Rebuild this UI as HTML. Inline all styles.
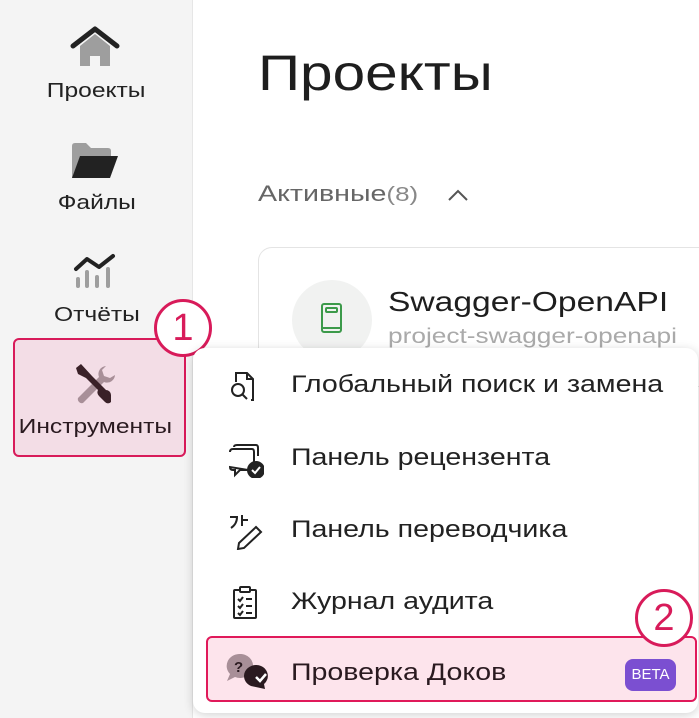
<!DOCTYPE html>
<html><head><meta charset="utf-8"><style>
*{margin:0;padding:0;box-sizing:border-box}
body{width:699px;height:718px;overflow:hidden;background:#fff;font-family:"Liberation Sans","DejaVu Sans",sans-serif;position:relative;color:#222}
.side{position:absolute;left:0;top:0;width:193px;height:718px;background:#f4f4f4;border-right:1px solid #e6e6e6}
.abs{position:absolute}
.lbl{position:absolute;width:193px;text-align:center;font-size:20px;color:#222}
.lbl span{display:inline-block;transform:scaleX(1.23);transform-origin:center}
.sx{display:inline-block;transform-origin:left center;white-space:nowrap}
.circ{position:absolute;width:58px;height:58px;border-radius:50%;border:3px solid #d81b5a;background:#fff;color:#d81b5a;font-size:38px;text-align:center;line-height:52px}
.item{position:absolute;left:291px;font-size:24px;color:#222;white-space:nowrap;transform:scaleX(1.19);transform-origin:left center}
</style></head><body>
<div class="side"></div>
<svg class="abs" style="left:70px;top:26px" width="50" height="42" viewBox="0 0 50 42"><path d="M10 20 L25 8 L40 20 V40 H30 V30 H20 V40 H10Z" fill="#9e9e9e"/><path d="M3 20 L25 3 L47 20" stroke="#222" stroke-width="5" fill="none" stroke-linejoin="round" stroke-linecap="round"/></svg>
<div class="lbl" style="top:80px"><span>Проекты</span></div>
<svg class="abs" style="left:70px;top:142px" width="50" height="40" viewBox="0 0 50 40"><path d="M2 4 Q2 1 5 1 H16 L21 6 H38 Q41 6 41 9 V14 H2Z" fill="#9e9e9e"/><path d="M2 14 H40 V36 H2Z" fill="#9e9e9e"/><path d="M10 14 H48 L40 36 H2Z" fill="#222"/></svg>
<div class="lbl" style="top:192px"><span>Файлы</span></div>
<svg class="abs" style="left:73px;top:252px" width="44" height="38" viewBox="0 0 44 38"><path d="M3 17 L14 7 L26 15 L40 4" stroke="#222" stroke-width="4" fill="none" stroke-linecap="round" stroke-linejoin="round"/><g stroke="#9e9e9e" stroke-width="4" stroke-linecap="round"><line x1="5" y1="27" x2="5" y2="34"/><line x1="14" y1="20" x2="14" y2="34"/><line x1="24" y1="25" x2="24" y2="34"/><line x1="35" y1="17" x2="35" y2="34"/></g></svg>
<div class="lbl" style="top:304px"><span>Отчёты</span></div>
<div class="abs" style="left:13px;top:338px;width:173px;height:119px;background:#f3dde6;border:2px solid #d81b5a;border-radius:6px"></div>
<svg class="abs" style="left:72px;top:362px" width="46" height="46" viewBox="0 0 46 46"><path d="M34 4 a8 8 0 0 0 -7 11 L6 36 a4 4 0 0 0 5 5 L32 20 a8 8 0 0 0 11 -7 L38 16 L32 14 L30 8Z" fill="#a88f98"/><path d="M4 6 L9 2 L20 14 L34 28 a5 5 0 0 1 5 5 L39 40 a4 4 0 0 1 -6 0 L27 34 a5 5 0 0 1 -1 -6 L14 16 L6 12Z" fill="#3a2128"/></svg>
<div class="lbl" style="left:2px;top:416px;width:187px;color:#2a1a20"><span>Инструменты</span></div>
<div class="circ" style="left:154px;top:299px">1</div>
<div class="abs" style="left:258px;top:44px;font-size:50px;color:#1e1e1e"><span class="sx" style="transform:scaleX(1.17)">Проекты</span></div>
<div class="abs" style="left:258px;top:181px;font-size:22px;color:#666"><span class="sx" style="transform:scaleX(1.3)">Активные<span style="font-size:20px;color:#888">(8)</span></span></div>
<svg class="abs" style="left:447px;top:188px" width="22" height="14" viewBox="0 0 22 14"><path d="M2 12 L11 3 L20 12" stroke="#555" stroke-width="2" fill="none"/></svg>
<div class="abs" style="left:258px;top:247px;width:460px;height:140px;border:1px solid #e4e4e4;border-radius:14px;background:#fff"></div>
<div class="abs" style="left:292px;top:280px;width:80px;height:80px;border-radius:50%;background:#f1f2f1"></div>
<svg class="abs" style="left:320px;top:302px" width="24" height="34" viewBox="0 0 24 34"><rect x="2" y="2" width="19" height="28" rx="2" fill="none" stroke="#3c9a4a" stroke-width="2"/><rect x="6" y="6" width="11" height="4" rx="1" fill="none" stroke="#3c9a4a" stroke-width="2"/><line x1="2" y1="26" x2="21" y2="26" stroke="#3c9a4a" stroke-width="2"/></svg>
<div class="abs" style="left:388px;top:286px;font-size:28px;color:#1e1e1e"><span class="sx" style="transform:scaleX(1.2)">Swagger-OpenAPI</span></div>
<div class="abs" style="left:388px;top:325px;font-size:21px;color:#aaa"><span class="sx" style="transform:scaleX(1.25)">project-swagger-openapi</span></div>
<div class="abs" style="left:193px;top:348px;width:505px;height:365px;background:#fff;border-radius:12px;box-shadow:0 2px 10px rgba(0,0,0,.18)"></div>
<svg class="abs" style="left:228px;top:370px" width="32" height="34" viewBox="0 0 32 34" fill="none" stroke="#222" stroke-width="2"><path d="M8 12 V3 H19 L25 9 V30 H23"/><path d="M19 3 V9 H25"/><circle cx="10" cy="20" r="6"/><line x1="14" y1="24" x2="19" y2="29"/></svg>
<div class="item" style="top:371px">Глобальный поиск и замена</div>
<svg class="abs" style="left:228px;top:442px" width="36" height="36" viewBox="0 0 36 36" fill="none" stroke="#222" stroke-width="2"><path d="M6 5 Q6 3 9 3 H28 Q30 3 30 6 V14"/><path d="M2 10 Q2 7 5 7 H24 Q26 7 26 10 V20 M20 28 H12 L7 33 V28 H5 Q2 28 2 25Z"/><circle cx="28" cy="28" r="8" fill="#222"/><path d="M24 28 L27 31 L32 25" stroke="#fff"/></svg>
<div class="item" style="top:444px">Панель рецензента</div>
<svg class="abs" style="left:228px;top:514px" width="36" height="36" viewBox="0 0 36 36" fill="none" stroke="#222" stroke-width="2"><path d="M2 3 H9 Q9 10 3 14"/><path d="M14 1 V12 M14 6 H20"/><path d="M28 13 L33 18 L16 34 L10 35 L11 29Z"/></svg>
<div class="item" style="top:516px">Панель переводчика</div>
<svg class="abs" style="left:230px;top:586px" width="30" height="34" viewBox="0 0 30 34" fill="none" stroke="#222" stroke-width="2"><rect x="4" y="4" width="22" height="28" rx="1"/><rect x="10" y="1" width="10" height="5" rx="1" fill="#fff"/><path d="M8 13 L10 15 L13 11 M16 13 H22 M8 20 L10 22 L13 18 M16 20 H22 M8 27 L10 29 L13 25 M16 27 H22"/></svg>
<div class="item" style="top:588px">Журнал аудита</div>
<div class="abs" style="left:206px;top:636px;width:491px;height:66px;background:#fde4ec;border:2px solid #e0195a;border-radius:6px"></div>
<svg class="abs" style="left:225px;top:654px" width="52" height="40" viewBox="0 0 52 40"><path d="M14 0 A13 12 0 1 1 10 23 L2 27 L5 20 A13 12 0 0 1 14 0Z" fill="#a88f98"/><text x="9" y="18" font-family="Liberation Sans" font-weight="bold" font-size="15" fill="#2a1a20">?</text><path d="M36 12 A12 11 0 0 0 26 32 L40 35 L39 30 A12 11 0 0 0 36 12Z" fill="#2a1a20"/><path d="M31 23 L35 27 L41 20" stroke="#fff" stroke-width="2.5" fill="none"/></svg>
<div class="item" style="top:659px;color:#2a1a20">Проверка Доков</div>
<div class="abs" style="left:625px;top:659px;width:51px;height:32px;background:#7b4fd1;border-radius:8px;color:#fff;font-size:15px;text-align:center;line-height:32px">BETA</div>
<div class="circ" style="left:635px;top:589px">2</div>
</body></html>
